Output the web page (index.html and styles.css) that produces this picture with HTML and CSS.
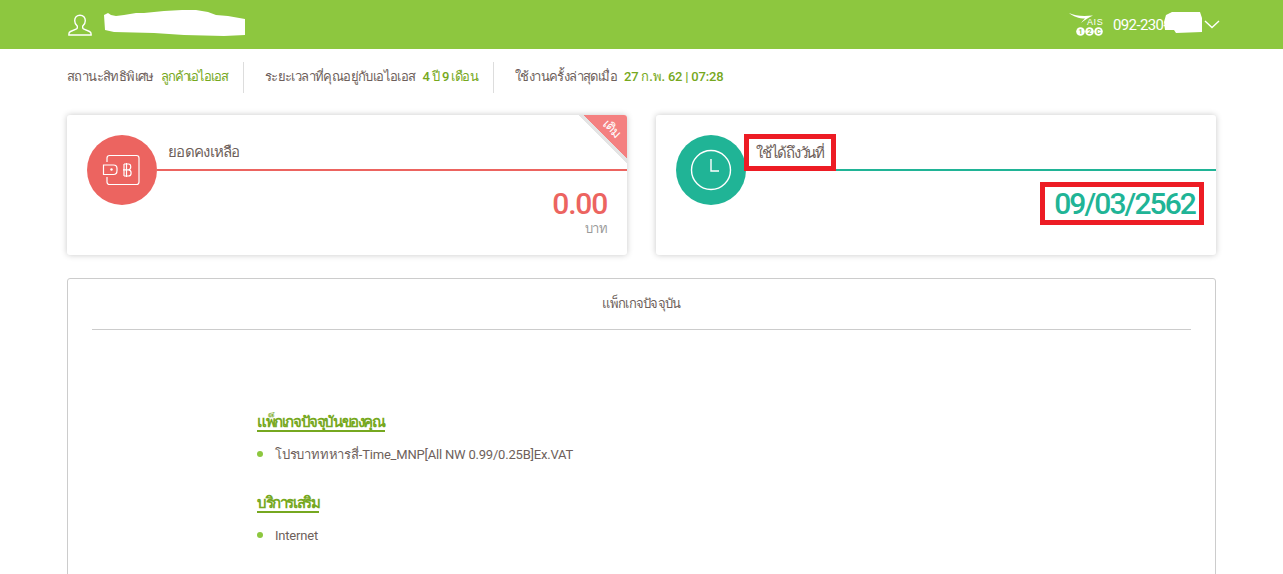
FILE: index.html
```html
<!DOCTYPE html>
<html lang="th">
<head>
    <meta charset="UTF-8">
    <meta name="viewport" content="width=device-width, initial-scale=1.0">
    <title>AIS 12Call</title>
    <link rel="stylesheet" href="styles.css">
</head>
<body>
    <header class="topbar">
        <div class="user">
            <svg class="user-icon" width="24" height="22" viewBox="0 0 24 22" fill="none" stroke="#fff" stroke-width="1.4">
                <path d="M12 1.2c-3.3 0-5.3 2.500-5.300 5.600 0 2.400 1.100 4.200 2.600 5.300v1.600c0 .7-.6 1.100-1.300 1.400l-5.500 2.400c-1 .5-1.600 1.500-1.600 2.400v1.100h22.200v-1.100c0-.9-.6-1.900-1.600-2.400l-5.500-2.400c-.7-.3-1.300-.7-1.300-1.400v-1.600c1.500-1.100 2.600-2.900 2.600-5.300 0-3.100-2-5.600-5.300-5.600z"/>
            </svg>
            <svg class="user-name" width="141" height="29" viewBox="0 0 141 29" fill="#fff">
                <path d="M0 5 4 3l3 2 5 1 8-1 12-2 8 0 20-2 18-1 14 0 12 2 8 3 12 1 17 3v16l-21 1-40-1-30-2-40-1-9-2z"/>
            </svg>
        </div>
        <div class="account">
            <svg class="ais-logo" width="36" height="26" viewBox="0 0 36 26">
                <path d="M0 1c6 3 14 3.500 24 2.500-4 1.500-8 4.500-12 7.500 1-1.500 2.500-3 4-4.500C10 6.500 4 4.500 0 1z" fill="#fff"/>
                <text x="18" y="12.500" class="ais-word">AIS</text>
                <circle cx="11.500" cy="19.500" r="4.300" fill="#fff"/>
                <circle cx="20.500" cy="19.500" r="4.300" fill="#fff"/>
                <circle cx="29.500" cy="19.500" r="4.300" fill="#fff"/>
                <text x="11.500" y="22" class="ais-num">1</text>
                <text x="20.500" y="22" class="ais-num">2</text>
                <text x="29.500" y="22" class="ais-num">C</text>
            </svg>
            <span class="phone">092-230-</span>
            <svg class="phone-mask" width="38" height="22" viewBox="0 0 38 22" fill="#fff">
                <path d="M2 4 8 1l28 0 2 6 0 14-26 1-2-3-9 0-1-8z"/>
            </svg>
            <svg class="chevron" width="16" height="9" viewBox="0 0 16 9" fill="none" stroke="#fff" stroke-width="1.4">
                <path d="M1 1l7 6.500L15 1"/>
            </svg>
        </div>
    </header>

    <div class="stats">
        <div class="stat">สถานะสิทธิพิเศษ <b>ลูกค้าเอไอเอส</b></div>
        <div class="stat">ระยะเวลาที่คุณอยู่กับเอไอเอส <b>4 ปี 9 เดือน</b></div>
        <div class="stat">ใช้งานครั้งล่าสุดเมื่อ <b>27 ก.พ. 62 | 07:28</b></div>
    </div>

    <div class="cards">
        <section class="card card-red">
            <div class="circle">
                <svg width="40" height="32" viewBox="0 0 40 32" fill="none" stroke="#fff" stroke-width="1.2">
                    <path d="M5 8V4c0-1.500 1-2.500 2.500-2.500h27C36 1.500 37 2.500 37 4v24c0 1.500-1 2.500-2.500 2.500h-27C6 30.500 5 29.500 5 28v-5"/>
                    <path d="M1.500 11h10c2 0 3.500 1 3.500 3.500v2c0 2.500-1.500 4-3.500 4h-10z" fill="#ec6460"/>
                    <circle cx="9.500" cy="15.500" r="1.200" fill="#fff" stroke="none"/>
                    <path d="M24.500 9v14M22 10v12M22 10h4.500c3 0 3 5.500 0 5.800 3.500.2 3.500 6.200 0 6.200H22M21 15.800h5.500"/>
                </svg>
            </div>
            <div class="card-body">
                <div class="card-title"><span>ยอดคงเหลือ</span></div>
                <div class="amount">0.00</div>
                <div class="unit">บาท</div>
            </div>
            <div class="ribbon"><span>เติม</span></div>
        </section>
        <section class="card card-green">
            <div class="circle">
                <svg width="42" height="42" viewBox="0 0 42 42" fill="none" stroke="#fff" stroke-width="1.400">
                    <circle cx="21" cy="21" r="19.500"/>
                    <path d="M21 10v12h8"/>
                </svg>
            </div>
            <div class="card-body">
                <div class="card-title"><span class="marked">ใช้ได้ถึงวันที่</span></div>
                <div class="amount"><span class="marked date">09/03/2562</span></div>
            </div>
        </section>
    </div>

    <section class="panel">
        <h2 class="panel-title">แพ็กเกจปัจจุบัน</h2>
        <div class="panel-content">
            <h3>แพ็กเกจปัจจุบันของคุณ</h3>
            <ul>
                <li>โปรบาททหารสี่-Time_MNP[All NW 0.99/0.25B]Ex.VAT</li>
            </ul>
            <h3>บริการเสริม</h3>
            <ul>
                <li>Internet</li>
            </ul>
        </div>
    </section>
</body>
</html>
```

FILE: styles.css
```css
body {
    margin: 0;
    height: 574px;
    overflow: hidden;
    background-color: #fff;
    font-family: Roboto, "Noto Sans", "DejaVu Sans", sans-serif;
    font-size: 14px;
    color: #6e5f5b;
}

.topbar {
    height: 49px;
    background-color: #8dc73f;
    display: flex;
    justify-content: space-between;
    align-items: center;
    padding: 0 63px 0 68px;
}

.user {
    display: flex;
    align-items: center;
    gap: 12px;
}

.account {
    display: flex;
    align-items: center;
}

.ais-logo {
    margin-right: 8px;
}

.ais-word {
    font-family: "Liberation Sans", sans-serif;
    font-size: 9px;
    fill: #fff;
    letter-spacing: 0.6px;
}

.ais-num {
    font-size: 7px;
    font-weight: 700;
    fill: #8dc73f;
    text-anchor: middle;
}

.phone {
    color: #fff;
    font-size: 15px;
    letter-spacing: -0.6px;
}

.phone-mask {
    margin: 0 0 5px -3px;
}

.chevron {
    margin-left: 2px;
}

.stats {
    display: flex;
    padding-left: 67px;
    margin-top: 13px;
    height: 31px;
}

.stat {
    display: flex;
    align-items: center;
    gap: 7px;
    padding: 0 15px 2px 0;
    margin-right: 21px;
    border-right: 1px solid #ddd;
    font-size: 13px;
    letter-spacing: -0.6px;
}

.stat:last-child {
    border-right: none;
}

.stat b {
    font-weight: 500;
    color: #76a820;
}

.stat:first-child b {
    letter-spacing: -1.1px;
}

.stat:last-child b {
    letter-spacing: -0.2px;
}

.cards {
    display: flex;
    gap: 29px;
    margin: 22px 67px 0;
}

.card {
    position: relative;
    flex: 1;
    height: 140px;
    display: flex;
    background-color: #fff;
    border-radius: 3px;
    box-shadow: 0 0 6px rgba(0, 0, 0, 0.22);
    overflow: hidden;
    padding: 20px 0 0 20px;
    box-sizing: border-box;
}

.circle {
    width: 70px;
    height: 70px;
    border-radius: 50%;
    flex: none;
    display: flex;
    align-items: center;
    justify-content: center;
}

.card-red .circle {
    background-color: #ec6460;
}

.card-green .circle {
    background-color: #20b496;
}

.card-body {
    flex: 1;
    text-align: right;
}

.card-title {
    height: 34px;
    padding-left: 11px;
    text-align: left;
    border-bottom: 2px solid;
    display: flex;
    align-items: center;
    font-size: 15px;
    letter-spacing: -0.7px;
}

.card-red .card-title {
    border-color: #ec6460;
}

.card-green .card-title {
    border-color: #20b496;
}

.amount {
    font-size: 30px;
    font-weight: 500;
    padding: 13px 20px 0 0;
    line-height: 40px;
}

.card-red .amount {
    color: #ec6460;
    letter-spacing: -1.2px;
}

.card-green .amount {
    color: #20b496;
    letter-spacing: -1.9px;
    padding: 11px 12px 0 0;
    line-height: 33px;
}

.unit {
    padding-right: 20px;
    margin-top: -2px;
    color: #9a9a9a;
    font-size: 13px;
    line-height: 14px;
    letter-spacing: -0.5px;
}

.marked {
    border: 5px solid #ed1c24;
}

.card-title .marked {
    margin: 1px 0 0 -13px;
    padding: 4px 7px;
    box-sizing: border-box;
    height: 37px;
    display: flex;
    align-items: center;
    letter-spacing: -1.25px;
}

.date {
    display: inline-block;
    padding: 0 4px 0 9px;
}

.ribbon {
    position: absolute;
    top: -1px;
    right: -1px;
    width: 50px;
    height: 50px;
    background: linear-gradient(45deg, transparent 50%, #e4e4e4 50%, #e4e4e4 55%, #f48080 55%);
    overflow: hidden;
}

.ribbon span {
    position: absolute;
    top: 7px;
    left: 19px;
    width: 30px;
    text-align: center;
    line-height: 16px;
    color: #fff;
    font-size: 13px;
    letter-spacing: -0.5px;
    transform: rotate(45deg);
}

.panel {
    margin: 23px 67px 0;
    height: 320px;
    border: 1px solid #ccc;
    border-radius: 3px;
    padding: 0 24px;
}

.panel-title {
    margin: 0;
    height: 50px;
    line-height: 50px;
    text-align: center;
    font-size: 13px;
    letter-spacing: -0.7px;
    font-weight: 400;
    border-bottom: 1px solid #ccc;
}

.panel-content {
    padding: 81px 0 0 165px;
}

.panel-content h3 {
    margin: 0;
    display: inline-block;
    font-size: 15px;
    line-height: 16px;
    padding-top: 3px;
    font-weight: 700;
    letter-spacing: -1.4px;
    color: #76a820;
    border-bottom: 2px solid #76a820;
}

.panel-content ul {
    list-style: none;
    margin: 12px 0 27px;
    padding: 0;
}

.panel-content li {
    position: relative;
    padding-left: 18px;
    line-height: 21px;
    font-size: 13px;
    letter-spacing: -0.2px;
}

.panel-content li::before {
    content: "";
    position: absolute;
    left: 0;
    top: 7px;
    width: 6px;
    height: 6px;
    border-radius: 50%;
    background-color: #8dc73f;
}
```
